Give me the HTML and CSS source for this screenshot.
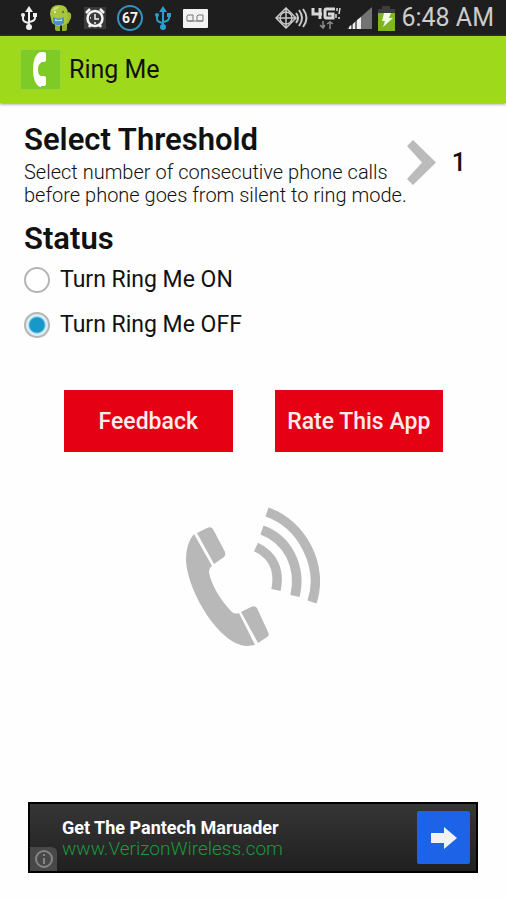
FILE: index.html
```html
<!DOCTYPE html>
<html lang="en">
<head>
<meta charset="utf-8">
<meta name="viewport" content="width=device-width, initial-scale=1">
<title>Ring Me</title>
<link rel="stylesheet" href="styles.css">
</head>
<body>
<div class="status-bar">
  <div class="notifications">
    <svg class="usb" width="18" height="24" viewBox="0 0 18 24" aria-hidden="true"><use href="#usb-shape"/></svg>
    <svg width="24" height="28" viewBox="0 0 24 28" aria-hidden="true">
      <path d="M19 8q4 0 3 6l-3 6-3-2 2-6z" fill="#9db92f"/>
      <path d="M6 19h5v8H8q-2 0-2-2zm7 0h5v6q0 2-2 2h-3z" fill="#8eaf2c"/>
      <path d="M1 10Q1 1 10 1t9 9l-1 9q-8 6-15 0z" fill="#a9c53d"/>
      <path d="M3 7Q6 2 11 3q-4 3-8 4z" fill="#cfdf83"/>
      <circle cx="6" cy="8" r="1" fill="#eef5cc"/><circle cx="14" cy="8" r="1.200" fill="#6b8021"/>
      <path d="M4 13q6 3 11 0v6l-3 2H7l-3-2z" fill="#4c8fd1"/>
      <path d="M6 15q4 2 7 0v2H6z" fill="#bfdcf4"/>
    </svg>
    <svg width="22" height="22" viewBox="0 0 22 22" fill="none" aria-hidden="true">
      <path d="M0 0h22v22H0z" fill="#3a3a3a"/>
      <circle cx="11" cy="11.500" r="7.500" stroke="#f4f4f4" stroke-width="2.500"/>
      <path d="M2 6l4-4m14 4-4-4M5 20l2-3m10 3-2-3" stroke="#f4f4f4" stroke-width="2.500"/>
      <path d="M11 7v5h4M6 11h1m3 5h2" stroke="#f4f4f4" stroke-width="1.500"/>
    </svg>
    <span class="charge">67</span>
    <svg class="usb usb-blue" width="18" height="24" viewBox="0 0 18 24" aria-hidden="true"><use href="#usb-shape"/></svg>
    <svg width="25" height="19" viewBox="0 0 25 19" fill="none" aria-hidden="true">
      <rect width="25" height="19" rx="1" fill="#f2f2f2"/>
      <path d="M5 6h5v6H4V7zm10 0h5v6h-6V7zM5 12h15" stroke="#777" stroke-width="1"/>
    </svg>
  </div>
  <div class="system">
    <div class="network">
      <svg width="34" height="22" viewBox="0 0 34 22" fill="none" stroke="#c8c8c8" aria-hidden="true">
        <path d="M1 11 11 1l10 10-10 10zM11 1v20M1 11h20" stroke-width="1.500"/><circle cx="11" cy="11" r="6" stroke-width="1.500"/>
        <path d="M21 6q4 5 0 10M24 3q6 8 0 16M28 2q7 9 0 18" stroke-width="2"/>
      </svg>
      <svg width="30" height="24" viewBox="0 0 30 24" fill="none" stroke="#d8d8d8" aria-hidden="true">
        <path d="M2 2v6h9M9 2v11M24 3h-9q-1 0-1 2v5q0 2 1 2h7V8h-5" stroke-width="3"/>
        <path d="M26 2v3m3-3-1 6m-3 0v4m2 0h2" stroke-width="1.500"/>
        <path d="M12 15v7m-3-3 3 3 2-3M19 23v-8m-3 3 3-2 3 2" stroke="#8c8c8c" stroke-width="1.500"/>
      </svg>
    </div>
    <svg width="25" height="22" viewBox="0 0 25 22" aria-hidden="true">
      <path d="M25 0v22H0z" fill="#737373"/>
      <path d="M2 20v2h2v-4zm4-3v5h2v-7zm4-4v9h4V10z" fill="#eee"/>
    </svg>
    <svg width="17" height="25" viewBox="0 0 17 25" aria-hidden="true">
      <path d="M4 0h8v3h5v5H0V3h4z" fill="#3d3d3d"/><path d="M0 7h17v18H0z" fill="#7db71a"/>
      <path d="M6 7h7l-2 5h4L5 21l2-6H4z" fill="#f3f8e8"/>
    </svg>
    <time class="clock">6:48 AM</time>
  </div>
</div>

<header class="app-bar">
  <svg class="app-icon" width="41" height="41" viewBox="0 0 41 41" aria-hidden="true">
    <path d="M0 0h41v41H0z" fill="#7fcb25"/><path d="M.5.5h40v40H.5z" fill="none" stroke="#98d63d"/>
    <path d="M20 3q-7 3-7 17.500T20 38h1V27q-3-1-3-6.500T21 14V3z" fill="#fff"/>
    <path d="M21 3h3q2 0 2 2v7l-2 1h-3zm0 24h3l2 1v7q0 2-2 2h-3z" fill="#fff"/>
  </svg>
  <h1 class="app-title">Ring Me</h1>
</header>

<main class="content">
  <section class="threshold">
    <div class="threshold-text">
      <h2 class="heading">Select Threshold</h2>
      <p class="description">Select number of consecutive phone calls<br>before phone goes from silent to ring mode.</p>
    </div>
    <button class="picker" type="button" aria-label="Change threshold">
      <svg width="29" height="45" viewBox="0 0 29 45" aria-hidden="true"><path d="M6 0 29 22.500 6 45 0 39l15-16.500L0 6z" fill="#bbb"/></svg>
      <span>1</span>
    </button>
  </section>

  <fieldset class="status">
    <legend class="heading">Status</legend>
    <label class="option"><input class="radio" type="radio" name="ring">Turn Ring Me ON</label>
    <label class="option"><input class="radio" type="radio" name="ring" checked>Turn Ring Me OFF</label>
  </fieldset>

  <div class="actions">
    <button class="action" type="button">Feedback</button>
    <button class="action" type="button">Rate This App</button>
  </div>

  <svg class="illustration" width="136" height="140" viewBox="186 507 136 140" aria-hidden="true">
    <g fill="#b8b8b8">
      <path d="M195 534Q187 543 187 560C188 590 220 645 248 646L256 645 240 613Q235 615 231 610C222 600 212 585 210 572Q210 568 213 566z"/>
      <path d="M198 533l10-5q4-2 6 1l12 23q1 3-1 5l-10 7z"/>
      <path d="M242 612l10-5q4-2 6 1l11 24q2 3-1 5l-9 6z"/>
    </g>
    <g fill="none" stroke="#b8b8b8" stroke-width="9.500">
      <path d="M257 547C274 555 281 570 277 590"/>
      <path d="M263 530C288 539 303 566 296 596"/>
      <path d="M268 512C303 524 325 566 313 602"/>
    </g>
  </svg>
</main>

<aside class="ad" aria-label="Advertisement">
  <svg class="ad-info" width="27" height="24" viewBox="0 0 27 24" fill="none" aria-hidden="true">
    <path d="M0 0h21q6 0 6 6v18H0z" fill="#484848"/>
    <circle cx="14" cy="12" r="8" stroke="#858585" stroke-width="2"/><path d="M14 7v2m0 2v6" stroke="#858585" stroke-width="2"/>
  </svg>
  <div class="ad-copy">
    <strong class="ad-title">Get The Pantech Maruader</strong>
    <a class="ad-link" href="#">www.VerizonWireless.com</a>
  </div>
  <button class="ad-go" type="button" aria-label="Open advertisement">
    <svg width="26" height="22" viewBox="0 0 26 22" aria-hidden="true"><path d="M0 6h13V0l13 11-13 11v-6H0z" fill="#f2f2f2"/></svg>
  </button>
</aside>

<svg class="symbols" aria-hidden="true">
  <symbol id="usb-shape" viewBox="0 0 18 24">
    <path d="M9 4v17M3 9v4q0 3 6 4m6-8v3q0 3-6 4" fill="none" stroke="currentColor" stroke-width="2"/>
    <path d="M9 0l4 6H5z" fill="currentColor"/><circle cx="3" cy="9" r="2" fill="currentColor"/><path d="M13 7h4v4h-4z" fill="currentColor"/><circle cx="9" cy="21" r="3" fill="currentColor"/>
  </symbol>
</svg>
</body>
</html>
```
FILE: styles.css
```css
* {
  box-sizing: border-box;
}

body {
  margin: 0;
  min-height: 100vh;
  display: flex;
  flex-direction: column;
  background: #fefefe;
  color: #111;
  font-family: Roboto, "Liberation Sans", sans-serif;
}

h1, h2, p {
  margin: 0;
}

svg {
  display: block;
  flex: none;
}

button {
  border: 0;
  padding: 0;
  font-family: inherit;
  cursor: pointer;
}

.symbols {
  position: absolute;
  width: 0;
  height: 0;
}

.status-bar {
  height: 36px;
  padding: 0 12px 0 20px;
  display: flex;
  justify-content: space-between;
  align-items: center;
  background: #1e1e1e;
}

.notifications {
  display: flex;
  align-items: center;
  gap: 11px;
}

.system {
  display: flex;
  align-items: center;
  gap: 6px;
}

.network {
  display: flex;
  align-items: center;
  gap: 2px;
}

.usb {
  color: #f0f0f0;
}

.usb-blue {
  color: #2b9fcd;
}

.charge {
  width: 26px;
  height: 26px;
  border: 2px solid #3094bb;
  border-radius: 50%;
  color: #f4f4f4;
  font-size: 14px;
  font-weight: 700;
  line-height: 22px;
  text-align: center;
}

.clock {
  color: #ccc;
  font-size: 25px;
  line-height: 36px;
}

.app-bar {
  height: 67px;
  padding: 0 20px;
  display: flex;
  align-items: center;
  gap: 8px;
  background: #9fd91b;
  box-shadow: 0 1px 3px #888;
}

.app-title {
  font-size: 25px;
  font-weight: 400;
  line-height: 32px;
}

.content {
  flex: 1;
  padding: 19px 24px 0;
}

.threshold {
  display: flex;
  align-items: center;
}

.heading {
  padding: 0;
  font-size: 31px;
  font-weight: 600;
  line-height: 36px;
}

.description {
  margin-top: 3px;
  color: #111;
  font-size: 20px;
  font-weight: 300;
  line-height: 23px;
  white-space: nowrap;
}

.picker {
  padding-bottom: 4px;
  display: flex;
  align-items: center;
  gap: 16px;
  background: none;
  color: #111;
  font-size: 25px;
  font-weight: 500;
}

.status {
  margin: 14px 0 0;
  padding: 0;
  border: 0;
}

.option {
  height: 45px;
  display: flex;
  align-items: center;
  gap: 10px;
  font-size: 23px;
}

.radio {
  appearance: none;
  width: 26px;
  height: 26px;
  margin: 0;
  border: 2px solid #b5b5b5;
  border-radius: 50%;
  background: #fff;
}

.radio:checked {
  background: radial-gradient(circle, #1698c9 7px, #d9eff7 9px);
}

.actions {
  margin: 43px 39px 0 40px;
  display: grid;
  grid-template-columns: 1fr 1fr;
  gap: 42px;
}

.action {
  height: 62px;
  background: #e50014;
  color: #ffecec;
  font-size: 23px;
  font-weight: 500;
  white-space: nowrap;
}

.illustration {
  margin: 55px auto 0;
}

.ad {
  position: relative;
  height: 71px;
  margin: 0 28px 27px;
  padding: 0 6px 0 32px;
  display: flex;
  align-items: center;
  justify-content: space-between;
  border: 2px solid #000;
  background: linear-gradient(#363636, #202020);
}

.ad-info {
  position: absolute;
  left: 0;
  bottom: 0;
}

.ad-copy {
  display: flex;
  flex-direction: column;
}

.ad-title {
  color: #fff;
  font-size: 18px;
  line-height: 21px;
}

.ad-link {
  color: #1d963d;
  font-size: 19px;
  font-weight: 300;
  line-height: 21px;
  text-decoration: none;
}

.ad-go {
  width: 53px;
  height: 53px;
  display: grid;
  place-items: center;
  border-radius: 2px;
  background: #1d63e8;
}
```
